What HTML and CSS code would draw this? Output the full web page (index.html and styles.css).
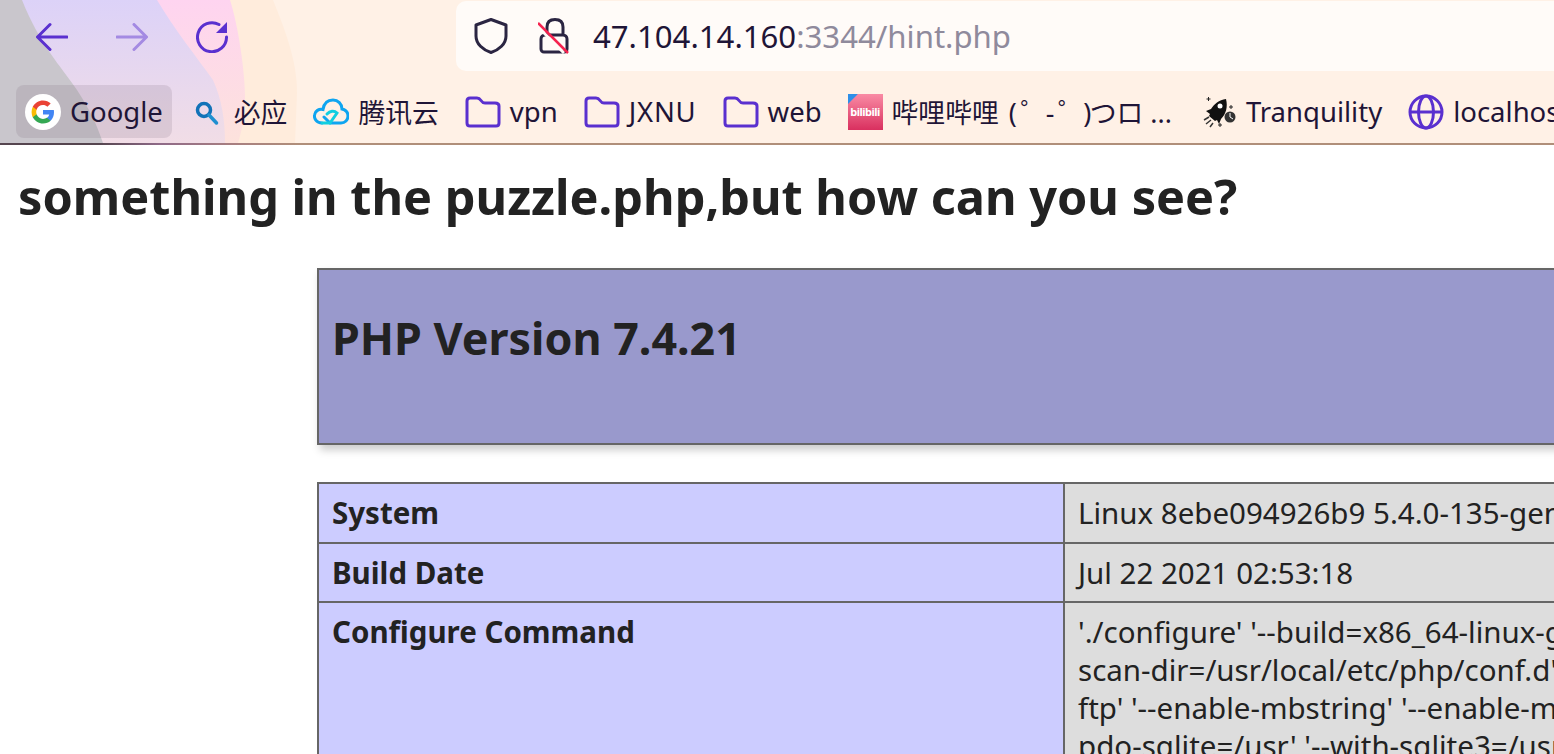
FILE: index.html
```html
<!DOCTYPE html>
<html lang="en">
<head>
    <meta charset="UTF-8">
    <meta name="viewport" content="width=device-width, initial-scale=1.0">
    <title>hint.php</title>
    <link rel="stylesheet" href="styles.css">
</head>
<body>
    <div class="chrome">
        <svg class="theme" width="320" height="143" viewBox="0 0 320 143" preserveAspectRatio="none" aria-hidden="true">
            <defs>
                <linearGradient id="lav" x1="0" y1="0" x2="0" y2="1">
                    <stop offset="0" stop-color="#dcd2f8"/>
                    <stop offset="1" stop-color="#f1dde6"/>
                </linearGradient>
                <linearGradient id="pink" x1="0" y1="0" x2="0" y2="1">
                    <stop offset="0" stop-color="#fed4f0"/>
                    <stop offset="1" stop-color="#fde2dc"/>
                </linearGradient>
            </defs>
            <path d="M273 0C285 30 297 60 297 93L295 143H230V0Z" fill="#ffecdc"/>
            <path d="M230 0C238 25 245 70 245 100 245 115 242 130 238 143H150V0Z" fill="url(#pink)"/>
            <path d="M157 0C175 30 195 55 213 80 222 100 225 120 225 143H0V0Z" fill="url(#lav)"/>
            <path d="M0 0H22C40 45 60 65 77 90 90 110 97 125 103 143H0Z" fill="#c9c6cc"/>
        </svg>
        <div class="nav-row">
            <div class="nav-buttons">
                <svg class="nav-icon" viewBox="0 0 32 32"><path d="M31 16H2M14 3.500 1.500 16 14 28.500"/></svg>
                <svg class="nav-icon dim" viewBox="0 0 32 32"><path d="M1 16H30M18 3.500 30.500 16 18 28.500"/></svg>
                <svg class="nav-icon" viewBox="0 0 32 32"><path d="M30.500 16A14.500 14.500 0 1 1 23 3.500"/><path class="solid" d="M31 1V12H20Z"/></svg>
            </div>
            <div class="url-bar">
                <svg class="shield" viewBox="0 0 34 36"><path d="M17 1.500 32 7V18C32 26 25 32 17 34.500 9 32 2 26 2 18V7Z"/></svg>
                <svg class="lock" viewBox="0 0 32 36">
                    <path d="M9 17V9C9 4 12 1.500 17 1.500S25 4 25 9V17M7 17H25A4 4 0 0 1 29 21V31A3 3 0 0 1 26 34H6A3 3 0 0 1 3 31V21A4 4 0 0 1 7 17Z"/>
                    <path class="slash-gap" d="M0 9 26 35"/>
                    <path class="slash" d="M0 5 30 35"/>
                </svg>
                <span class="url"><span class="host">47.104.14.160</span>:3344/hint.php</span>
            </div>
        </div>
        <div class="bookmarks">
            <div class="bookmark active">
                <svg class="bm-icon" viewBox="0 0 36 36">
                    <circle cx="18" cy="18" r="18" fill="#fff"/>
                    <path d="M29 18.300c0-.9-.1-1.700-.2-2.400H18v4.500h6.200c-.3 1.400-1.100 2.600-2.300 3.400v2.900h3.700c2.200-2 3.400-5 3.400-8.400z" fill="#4285f4"/>
                    <path d="M18 29.500c3.100 0 5.700-1 7.600-2.800l-3.700-2.900c-1 .7-2.300 1.100-3.900 1.100-3 0-5.500-2-6.400-4.700H7.800v3C9.700 26.900 13.600 29.500 18 29.500z" fill="#34a853"/>
                    <path d="M11.600 20.200c-.5-1.400-.5-3 0-4.400v-3H7.800c-1.600 3.200-1.600 7.200 0 10.400z" fill="#fbbc05"/>
                    <path d="M18 11.100c1.700 0 3.200.6 4.400 1.700l3.300-3.300C23.700 7.600 21.100 6.500 18 6.500c-4.400 0-8.300 2.600-10.200 6.300l3.800 3c.9-2.700 3.400-4.700 6.400-4.700z" fill="#ea4335"/>
                </svg>
                <span>Google</span>
            </div>
            <div class="bookmark">
                <svg class="bm-icon" viewBox="0 0 36 36"><circle cx="15" cy="16" r="6.500" fill="none" stroke="#1172b8" stroke-width="3.500"/><path d="M20 21 27.500 29" stroke="#1f8fd0" stroke-width="3.500" stroke-linecap="round"/></svg>
                <span class="cjk">必应</span>
            </div>
            <div class="bookmark">
                <svg class="bm-icon" viewBox="0 0 36 36"><path d="M9 29C3 29 1 24 1.500 21 2 17 6 14.500 10 15.500 11 9 15 6 20 6c5 0 9 4 9 9 4 1 6 4 6 7 0 4-3 7-7 7H17L11 23" fill="none" stroke="#0fa5f0" stroke-width="3" stroke-linecap="round"/><path d="M9 29H17L24 19C21 16 17 17 14 20" fill="none" stroke="#12cfe0" stroke-width="3" stroke-linecap="round"/></svg>
                <span class="cjk">腾讯云</span>
            </div>
            <div class="bookmark">
                <svg class="bm-icon folder" viewBox="0 0 36 36"><path d="M2 7C2 5 3 4 5 4H12C14 4 15 5 16 6.500 17 8 18 9 20 9H30C33 9 34 10 34 12V29C34 31 33 32 31 32H5C3 32 2 31 2 29Z"/></svg>
                <span>vpn</span>
            </div>
            <div class="bookmark">
                <svg class="bm-icon folder" viewBox="0 0 36 36"><path d="M2 7C2 5 3 4 5 4H12C14 4 15 5 16 6.500 17 8 18 9 20 9H30C33 9 34 10 34 12V29C34 31 33 32 31 32H5C3 32 2 31 2 29Z"/></svg>
                <span class="wide">JXNU</span>
            </div>
            <div class="bookmark">
                <svg class="bm-icon folder" viewBox="0 0 36 36"><path d="M2 7C2 5 3 4 5 4H12C14 4 15 5 16 6.500 17 8 18 9 20 9H30C33 9 34 10 34 12V29C34 31 33 32 31 32H5C3 32 2 31 2 29Z"/></svg>
                <span>web</span>
            </div>
            <div class="bookmark">
                <div class="bili"><span class="bili-tag"></span><span class="bili-word">bilibili</span></div>
                <span class="cjk">哔哩哔哩 <span class="kaomoji">( ゜- ゜)</span>つロ ...</span>
            </div>
            <div class="bookmark rocket">
                <svg class="bm-icon" viewBox="0 0 36 36">
                    <path d="M25 5C18 6 13 10 10 15L5 17 9 20 8 22 14 27 16 26 18 30 20 25C25 20 27 13 25 5Z" fill="#111"/>
                    <circle cx="19" cy="12" r="2.500" fill="#fff"/>
                    <path d="M3 26 8 23M5 30 10 26M9 33 12 29" stroke="#333" stroke-width="1.500"/>
                    <circle cx="29" cy="23" r="5.500" fill="#333"/>
                    <path d="M29 19V23L32 25" fill="none" stroke="#fff"/>
                    <path d="M7.500 3V7M5.500 5H9.500M30 11V15M28 13H32M19 29V33M17 31H21" stroke="#222"/>
                </svg>
                <span>Tranquility</span>
            </div>
            <div class="bookmark">
                <svg class="bm-icon folder" viewBox="0 0 36 36"><circle cx="18" cy="18" r="16"/><ellipse cx="18" cy="18" rx="7.500" ry="16"/><path d="M2 18H34"/></svg>
                <span>localhost</span>
            </div>
        </div>
    </div>
    <h1 class="page-title">something in the puzzle.php,but how can you see?</h1>
    <div class="center">
        <table class="info head-table">
            <tr class="h"><td><h1 class="version">PHP Version 7.4.21</h1></td></tr>
        </table>
        <table class="info">
            <tr><td class="e">System</td><td class="v">Linux 8ebe094926b9 5.4.0-135-generic #152-Ubuntu SMP Wed Nov 23 20:19:22 UTC 2022 x86_64</td></tr>
            <tr><td class="e">Build Date</td><td class="v">Jul 22 2021 02:53:18</td></tr>
            <tr><td class="e">Configure Command</td><td class="v">'./configure' '--build=x86_64-linux-gnu' '--with-config-file-path=/usr/local/etc/php' '--with-config-file-<br>scan-dir=/usr/local/etc/php/conf.d' '--enable-option-checking=fatal' '--with-mhash' '--with-pic' '--enable-<br>ftp' '--enable-mbstring' '--enable-mysqlnd' '--with-password-argon2' '--with-sodium=shared' '--with-<br>pdo-sqlite=/usr' '--with-sqlite3=/usr' '--with-curl' '--with-libedit' '--with-openssl' '--with-zlib'</td></tr>
        </table>
    </div>
</body>
</html>
```
FILE: styles.css
```css
html, body {
    height: 100%;
    overflow: hidden;
}

body {
    margin: 0;
    background-color: #fff;
    color: #222;
    font-family: "Noto Sans", "Noto Sans CJK SC", sans-serif;
}

.chrome {
    position: relative;
    height: 143px;
    background-color: #fff1e6;
    border-bottom: 2px solid #b08f7a;
    border-image: linear-gradient(to right, #55454f 0, #55454f 100px, #8f6a88 160px, #a87f80 235px, #b08f7a 300px) 1;
    color: #1f1537;
}

.theme {
    position: absolute;
    left: 0;
    top: 0;
}

.nav-row {
    position: relative;
    display: flex;
    height: 72px;
}

.nav-buttons {
    display: flex;
    align-items: center;
    gap: 48px;
    width: 456px;
    padding: 2px 0 0 36px;
    box-sizing: border-box;
}

.nav-icon {
    width: 32px;
    height: 32px;
    fill: none;
    stroke: #5a30cf;
    stroke-width: 3;
    stroke-linecap: round;
    stroke-linejoin: round;
}

.nav-icon.dim {
    opacity: 0.45;
}

.nav-icon .solid {
    fill: #5a30cf;
    stroke: none;
}

.url-bar {
    flex: 1;
    display: flex;
    align-items: center;
    margin-top: 1px;
    height: 70px;
    padding-left: 18px;
    background-color: #fffbf8;
    border-radius: 10px 0 0 10px;
}

.shield {
    width: 34px;
    height: 36px;
    fill: none;
    stroke: #2b2542;
    stroke-width: 3;
    stroke-linejoin: round;
}

.lock {
    width: 32px;
    height: 36px;
    margin-left: 30px;
    fill: none;
    stroke: #2b2542;
    stroke-width: 3;
}

.lock .slash-gap {
    stroke: #fffbf8;
}

.lock .slash {
    stroke: #f5234f;
    stroke-width: 2.5;
}

.url {
    margin-left: 23px;
    font-size: 31.15px;
    color: #8f8a9c;
    white-space: nowrap;
}

.host {
    color: #1f1537;
}

.bookmarks {
    position: relative;
    display: flex;
    gap: 8px;
    margin-top: 13px;
    padding-left: 16px;
    white-space: nowrap;
}

.bookmark {
    display: flex;
    align-items: center;
    gap: 9px;
    height: 53px;
    padding: 0 9px;
    border-radius: 8px;
    font-size: 27.5px;
}

.bookmark > span {
    margin-bottom: 1px;
}

.bookmark .cjk {
    font-size: 26.8px;
}

.bookmark .wide {
    letter-spacing: 0.8px;
}

.bookmark.rocket {
    margin-left: 3px;
}

.kaomoji {
    margin-left: 3px;
    letter-spacing: -1.6px;
}

.bookmark.active {
    background-color: rgba(120, 100, 120, 0.17);
}

.bm-icon {
    flex: none;
    width: 36px;
    height: 36px;
}

.bm-icon.folder {
    fill: none;
    stroke: #5a30cf;
    stroke-width: 3;
    stroke-linejoin: round;
}

.bili {
    position: relative;
    flex: none;
    display: flex;
    align-items: center;
    justify-content: center;
    width: 35px;
    height: 36px;
    overflow: hidden;
    background: linear-gradient(#f98ba4, #d9305f);
}

.bili-tag {
    position: absolute;
    left: -7px;
    top: -7px;
    width: 14px;
    height: 14px;
    background-color: #2e8fe8;
    transform: rotate(45deg);
}

.bili-word {
    color: #fff;
    font-size: 11px;
    font-weight: 700;
    letter-spacing: -0.5px;
}

.page-title {
    margin: 24px 0 0 18px;
    font-size: 48.65px;
    line-height: 54px;
    font-weight: 700;
    white-space: nowrap;
}

.center {
    margin: 45px 0 0 317px;
    width: 2335px;
}

.info {
    width: 2335px;
    table-layout: fixed;
    border-collapse: collapse;
    margin-bottom: 37px;
    font-size: 29.5px;
}

.info td {
    border: 2px solid #666;
    padding: 10px 13px 9.5px;
    line-height: 38px;
    vertical-align: top;
    white-space: nowrap;
}

.head-table {
    box-shadow: 3px 5px 8px #ccc;
}

.info .h td {
    height: 175px;
    padding: 0 13px;
    box-sizing: border-box;
    vertical-align: middle;
    background-color: #99c;
}

.version {
    margin: 0;
    padding-bottom: 37px;
    font-size: 44.8px;
    font-weight: 700;
}

.e {
    width: 718px;
    background-color: #ccf;
    font-weight: 700;
}

.v {
    background-color: #ddd;
}
```
